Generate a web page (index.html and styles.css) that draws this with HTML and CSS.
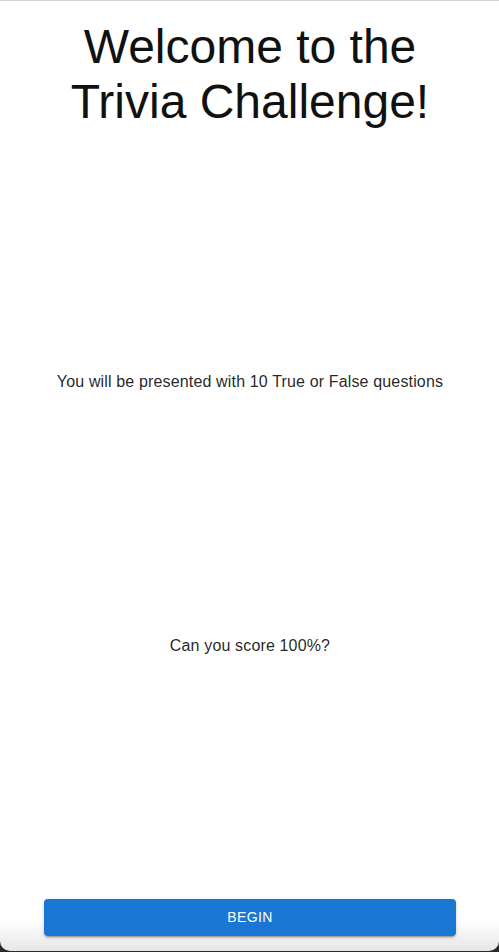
FILE: index.html
```html
<!DOCTYPE html>
<html lang="en">
<head>
<meta charset="utf-8">
<title>Trivia Challenge</title>
<link rel="stylesheet" href="styles.css">
</head>
<body>
<main class="window">
  <h1 class="title">Welcome to the Trivia Challenge!</h1>
  <p class="text">You will be presented with 10 True or False questions</p>
  <p class="text">Can you score 100%?</p>
  <button class="begin" type="button">BEGIN</button>
</main>
</body>
</html>
```

FILE: styles.css
```css
html {
  background: #2a2a2a;
}
body {
  margin: 0;
  font-family: "Liberation Sans", Arial, Helvetica, sans-serif;
  color: rgba(0, 0, 0, 0.87);
}
.window {
  box-sizing: border-box;
  height: 951px;
  border-top: 1px solid #d4d4d4;
  border-radius: 0 0 10px 10px;
  background: linear-gradient(to bottom, #ffffff calc(100% - 30px), #e6e6e6);
  padding: 18px 43px 15px 44px;
  display: flex;
  flex-direction: column;
  justify-content: space-between;
  align-items: stretch;
  text-align: center;
}
.title {
  margin: 0;
  font-size: 48px;
  line-height: 55px;
  font-weight: 400;
  color: #111;
  padding: 0 20px;
}
.text {
  margin: 0;
  font-size: 16px;
  line-height: 24px;
  letter-spacing: 0.00938em;
}
.begin {
  height: 37px;
  border: 0;
  border-radius: 4px;
  background: #1976d2;
  color: #fff;
  font-family: "Liberation Sans", Arial, sans-serif;
  font-size: 14px;
  font-weight: 500;
  letter-spacing: 0.02857em;
  box-shadow: 0 3px 1px -2px rgba(0,0,0,0.2), 0 2px 2px 0 rgba(0,0,0,0.14), 0 1px 5px 0 rgba(0,0,0,0.12);
  cursor: pointer;
}
```
